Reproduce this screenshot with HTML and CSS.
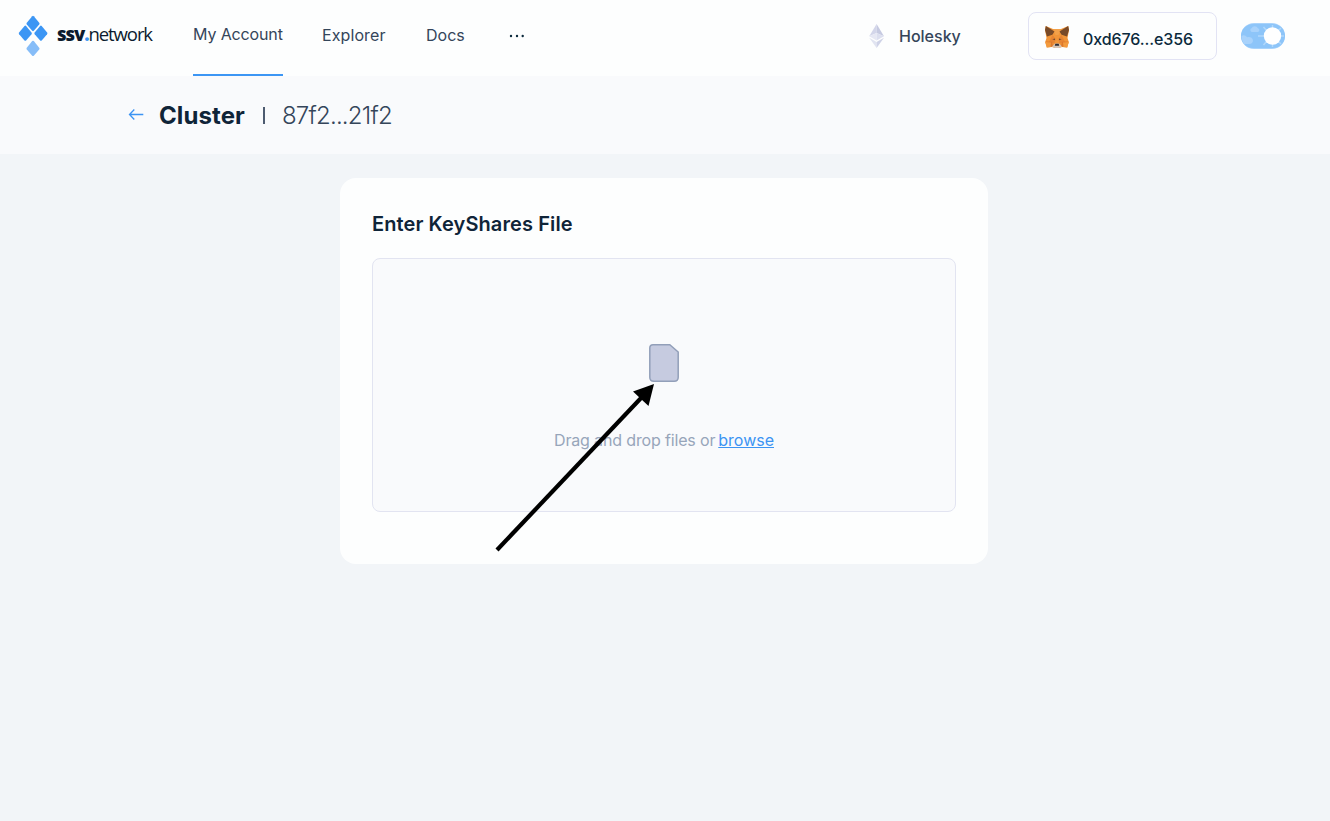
FILE: index.html
```html
<!DOCTYPE html>
<html lang="en">
<head>
<meta charset="utf-8">
<title>ssv.network</title>
<link rel="stylesheet" href="styles.css">
</head>
<body>
<header class="topbar">
  <a class="logo">
    <svg class="logo-mark" width="30" height="42" viewBox="0 0 30 42">
      <g fill="#3c96f4">
        <path d="M14.2 1.2Q15 .3 15.8 1.2L21.2 7.8Q21.9 8.7 21.2 9.6L15.8 15.8Q15 16.6 14.2 15.8L8.8 9.6Q8.1 8.7 8.8 7.8Z"/>
        <path d="M6.5 10.9Q7.3 10 8.1 10.9L13.500 17.4Q14.200 18.3 13.500 19.2L8.100 25.4Q7.300 26.2 6.500 25.4L1.100 19.2Q.4 18.3 1.100 17.4Z"/>
        <path d="M22.1 10.9Q22.9 10 23.7 10.9L29.1 17.4Q29.8 18.3 29.1 19.2L23.7 25.4Q22.9 26.2 22.1 25.4L16.7 19.2Q16 18.3 16.7 17.4Z"/>
      </g>
      <path fill="#86bdf8" d="M14.2 26.1Q15 25.2 15.8 26.1L21.2 32.7Q21.9 33.6 21.2 34.5L15.8 40.7Q15 41.5 14.2 40.7L8.8 34.5Q8.1 33.6 8.8 32.7Z"/>
    </svg>
    <span class="wordmark"><b>ssv</b><i>.</i>network</span>
  </a>
  <nav class="nav">
    <a class="nav-item active">My Account</a>
    <a class="nav-item explorer">Explorer</a>
    <a class="nav-item docs">Docs</a>
    <svg class="more" width="16" height="4" viewBox="0 0 16 4"><g fill="#0b2a3c"><circle cx="2" cy="2" r="1.2"/><circle cx="8" cy="2" r="1.2"/><circle cx="13.700" cy="2" r="1.2"/></g></svg>
  </nav>
  <div class="network">
    <svg width="16" height="24" viewBox="0 0 16 24">
      <path fill="#d3d6ea" d="M7.600 0 .2 12.2 7.600 9z"/><path fill="#c6cae1" d="M7.600 0v9l7.4 3.2z"/>
      <path fill="#e6e8f4" d="M.2 12.2 7.600 9v7.600z"/><path fill="#dcdfef" d="M15 12.2 7.600 9v7.600z"/>
      <path fill="#e1e4f1" d="M.2 13.7 7.600 18v6z"/><path fill="#cfd3e7" d="M15 13.7 7.600 18v6z"/>
    </svg>
    <span class="network-name">Holesky</span>
  </div>
  <button class="wallet">
    <svg width="24" height="23" viewBox="0 0 24 23">
      <path fill="#f19538" d="M.8 0 8 3h8l7.2-3L24 4l-1.500 8 1.300 4-1.600 5.500-5.200-.4-3 1h-4l-3-1-5.200.4L.2 16l1.300-4L0 4z"/>
      <path fill="#e68432" d="M7.500 9 10.500 12.500 9.500 17.500 4 16zM16.500 9l-3 3.500 1 5L20 16z"/>
      <path fill="#f3a149" d="M8 3h8l-2.500 6h-3z"/>
      <path fill="#dc782d" d="M.5 15.500 7 15.800l1 4.200-2 1zM23.500 15.500 17 15.800 16 20l2 1z"/>
      <path fill="#f39a3c" d="M.2 16 6 16.500l-.5 4.500-3.700.5zM23.800 16 18 16.500l.5 4.500 3.700.5z"/>
      <path fill="#784a28" d="M.8 0 9.500 5.600 7.400 8.800 2 10.500 0 4zM23.200 0l-8.700 5.600 2.100 3.200 5.400 1.700L24 4z"/>
      <path fill="#70492f" d="m7.300 13.300 2.500-.8.400 1.700zM16.700 13.300l-2.500-.8-.4 1.700z"/>
      <path fill="#d4c2b3" d="m7 20.500 3-3h4l3 3-3 1.500h-4z"/>
      <path fill="#2d2b32" d="M10.300 17.700h3.400l.5 2h-4.400z"/>
    </svg>
    <span class="address">0xd676...e356</span>
  </button>
  <svg class="theme" width="44" height="26" viewBox="0 0 44 26">
    <rect width="44" height="26" rx="13" fill="#a9d3fb"/>
    <rect y="1" width="44" height="24" rx="12" fill="#8dc5f9"/>
    <path fill="#a8d2fb" d="M11 9a2 2 0 0 1-.5-3.800 3.700 3.700 0 0 1 6.500 0 2 2 0 0 1 0 3.800zM1.500 18a12 12 0 0 1-1-5q3-2 5.700 1.200 4.600-1 5.800 3.100-.3 4-4 3.700H3z"/>
    <g stroke="#b1d8fb" stroke-width="1.500"><path d="M17 13h6M31.500 2v4M31.500 20v4M22.500 4l3 3.500M22.500 22l3-3.500M40 5l-3 3M40 21l-3-3M38 13h5"/></g>
    <circle cx="31.500" cy="13" r="8.700" fill="#fff"/>
  </svg>
</header>
<section class="title-bar">
  <svg class="back" width="16" height="12" viewBox="0 0 16 12"><path d="M15.300 5.500H1.500M6.300 .5 1.500 5.500l4.800 5" fill="none" stroke="#3c94f3" stroke-width="1.300"/></svg>
  <h1>Cluster</h1>
  <span class="divider"></span>
  <span class="cluster-id">87f2...21f2</span>
</section>
<main class="card">
  <h2>Enter KeyShares File</h2>
  <div class="dropzone">
    <svg class="file" width="30" height="38" viewBox="0 0 30 38"><path d="M4 .8h16.800L29.200 8v25.200q0 4-4 4H4.800q-4 0-4-4V4q0-3.200 3.200-3.200z" fill="#c6cbe0" stroke="#929fb9" stroke-width="1.500"/></svg>
    <p><span class="hint">Drag and drop files or</span><a class="browse">browse</a></p>
  </div>
</main>
<svg class="pointer" width="160" height="170" viewBox="0 0 160 170"><path d="M2 166 147 13" fill="none" stroke="#000" stroke-width="4.200"/><path d="M159 0 138 7.500l15.500 14.500z"/></svg>
</body>
</html>
```
FILE: styles.css
```css
* { box-sizing: border-box; }
body { margin: 0; min-height: 821px; background: #f2f5f8; font: 400 16px/24px Inter, sans-serif; color: #34455a; }
h1, h2, p { margin: 0; }
.topbar { height: 76px; display: flex; background: #fdfefe; }
.logo { width: 174px; padding: 15px 0 0 18px; display: flex; gap: 9px; }
.wordmark { padding-top: 7px; font: 400 18.5px/24px "Open Sans", sans-serif; letter-spacing: -1.08px; color: #0b1b2e; white-space: nowrap; }
.wordmark b { font-weight: 800; }
.wordmark i { font-style: normal; font-weight: 800; color: #3c96f4; }
.nav { width: 695px; padding-left: 19px; display: flex; align-items: flex-start; }
.nav-item { height: 76px; padding-top: 23px; white-space: nowrap; }
.active { width: 90px; margin-right: 39px; padding-top: 22px; border-bottom: 2px solid #3c96f4; letter-spacing: -.13px; }
.explorer { width: 65px; margin-right: 39px; letter-spacing: .1px; }
.docs { width: 39px; }
.more { margin: 34px 0 0 44px; }
.network { width: 159px; display: flex; gap: 14px; padding-top: 24px; }
.network-name { font-weight: 500; }
.wallet { width: 189px; height: 48px; margin-top: 12px; padding: 13px 0 0 16px; display: flex; gap: 14px; background: #fdfefe; border: 1px solid #e2e3f4; border-radius: 8px; font: 500 16px/24px Inter, sans-serif; color: #0b2a3c; white-space: nowrap; }
.address { padding-top: 1px; letter-spacing: -.1px; }
.theme { margin: 23px 0 0 24px; }
.title-bar { height: 78px; background: #f9fafc; padding-left: 128px; display: flex; align-items: flex-start; }
.back { margin: 33px 15px 0 0; }
h1 { width: 104px; padding-top: 24px; font: 700 24px/32px Inter, sans-serif; letter-spacing: .1px; color: #0f2438; }
.divider { width: 2px; height: 17px; margin: 31px 17px 0 0; background: #4d5b70; }
.cluster-id { padding-top: 24px; font-size: 24px; line-height: 32px; font-weight: 300; letter-spacing: -.8px; white-space: nowrap; }
.card { width: 648px; height: 386px; margin: 24px 0 0 340px; padding: 30px 32px; background: #fdfefe; border-radius: 16px; }
h2 { font: 600 20px/32px Inter, sans-serif; letter-spacing: .1px; color: #0f2438; white-space: nowrap; }
.dropzone { height: 254px; margin-top: 18px; padding-top: 85px; display: flex; flex-direction: column; align-items: center; background: #f9fafc; border: 1px solid #e2e4f1; border-radius: 8px; }
.dropzone p { width: 220px; margin-top: 46px; display: flex; color: #97a5ba; white-space: nowrap; }
.hint { width: 165px; letter-spacing: -.15px; }
.browse { color: #3c94f3; text-decoration: underline; }
.pointer { position: absolute; left: 495px; top: 384px; }
```
